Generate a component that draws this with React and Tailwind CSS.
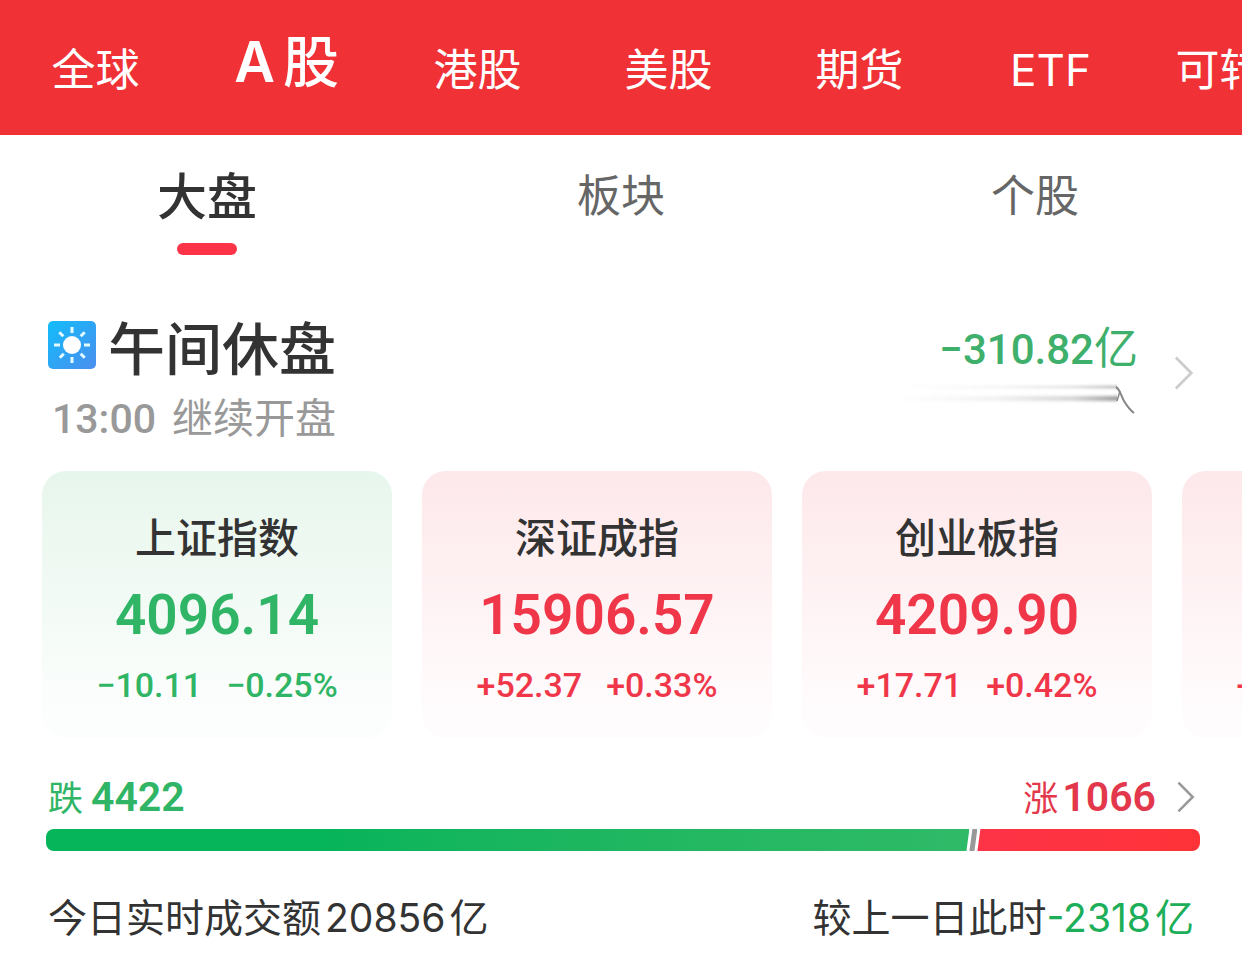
import React from "react";

const markets = ["全球", "A股", "港股", "美股", "期货", "ETF", "可转债"];
const sections = ["大盘", "板块", "个股"];
const indices = [
  { name: "上证指数", value: "4096.14", change: "−10.11", percent: "−0.25%", up: false },
  { name: "深证成指", value: "15906.57", change: "+52.37", percent: "+0.33%", up: true },
  { name: "创业板指", value: "4209.90", change: "+17.71", percent: "+0.42%", up: true },
  { name: "科创综指", value: "1820.35", change: "+12.64", percent: "+0.70%", up: true },
];
const falling = 4422;
const rising = 1066;

function MarketNav() {
  return (
    <nav className="flex h-[135px] items-start overflow-hidden bg-[#f03136] text-white">
      {markets.map((name) =>
        name === "A股" ? (
          <button key={name} className="flex w-[191px] shrink-0 items-baseline justify-center gap-2 whitespace-nowrap pt-6 text-[56px] leading-[68px] font-medium">
            <span className="font-['Inter'] font-semibold">A</span>
            <span>股</span>
          </button>
        ) : (
          <button key={name} className="w-[191px] shrink-0 whitespace-nowrap pt-9 text-center text-[44px] leading-[68px] font-['Inter','Noto_Sans_CJK_SC',sans-serif]">
            {name}
          </button>
        )
      )}
    </nav>
  );
}

function SectionTabs() {
  return (
    <div className="grid grid-cols-3 pt-6">
      {sections.map((name, i) => (
        <button key={name} className="flex flex-col items-center gap-4">
          <span className={i === 0 ? "text-[50px] leading-[68px] font-medium text-[#333]" : "text-[44px] leading-[68px] text-[#666]"}>
            {name}
          </span>
          {i === 0 && <span className="h-3 w-15 rounded-full bg-[#fd3347]" />}
        </button>
      ))}
    </div>
  );
}

function SunIcon() {
  return (
    <svg className="size-12" viewBox="0 0 48 48" aria-hidden="true">
      <defs>
        <linearGradient id="sky" x1="0" y1="0" x2="1" y2="1">
          <stop offset="0" stopColor="#12bdfb" />
          <stop offset="1" stopColor="#4b8eee" />
        </linearGradient>
      </defs>
      <rect width="48" height="48" rx="5" fill="url(#sky)" />
      <circle cx="24" cy="24" r="9" fill="#fff" />
      <path
        d="M24 6v6M24 36v6M6 24h6M36 24h6M11.3 11.3l4 4M32.7 32.7l4 4M11.8 36.7l4-4M32.7 15.3l4-4"
        stroke="#e4fbff"
        strokeWidth="3"
      />
    </svg>
  );
}

function Chevron({ className }) {
  return (
    <svg className={className} viewBox="0 0 22 38" fill="none" stroke="currentColor" aria-hidden="true">
      <path d="M2 2l17 17L2 36" strokeWidth="3" />
    </svg>
  );
}

function TrendLine() {
  return (
    <svg className="h-8 w-60" viewBox="0 0 240 32" fill="none" aria-hidden="true">
      <defs>
        <linearGradient id="fade" x1="0" y1="0" x2="1" y2="0">
          <stop offset="0" stopColor="#777" stopOpacity="0" />
          <stop offset="0.45" stopColor="#777" stopOpacity="0.1" />
          <stop offset="0.8" stopColor="#777" stopOpacity="0.3" />
          <stop offset="1" stopColor="#777" stopOpacity="0.7" />
        </linearGradient>
        <filter id="soft" x="0" y="-3" width="1" height="7">
          <feGaussianBlur stdDeviation="0.4 1.7" />
        </filter>
      </defs>
      <g filter="url(#soft)">
        <rect x="0" y="3" width="219" height="2" fill="url(#fade)" />
        <rect x="0" y="13" width="219" height="5" fill="url(#fade)" />
      </g>
      <path d="M219 18l3-10" stroke="#888" strokeWidth="1.5" />
      <path d="M218 4c4 2 5 9 8 14s6 9 10 12" stroke="#868686" strokeWidth="2" />
    </svg>
  );
}

function IndexCard({ name, value, change, percent, up }) {
  return (
    <a
      href="#index"
      className={
        "flex h-[267px] w-[350px] shrink-0 flex-col items-center rounded-3xl bg-linear-to-b to-90% pt-8 " +
        (up ? "from-[#fde8ea] to-[#fffcfd] text-[#f0374a]" : "from-[#e7f6ec] to-[#fcfefd] text-[#30b566]")
      }
    >
      <span className="text-[41px] leading-[64px] font-medium text-[#333]">{name}</span>
      <span className="pt-3 font-['Roboto'] text-[55px] leading-[72px] font-semibold">{value}</span>
      <span className="flex gap-6 pt-3 font-['Roboto'] text-[34px] leading-[44px] font-medium">
        <span>{change}</span>
        <span>{percent}</span>
      </span>
    </a>
  );
}

export default function App() {
  return (
    <main lang="zh-CN" className="overflow-hidden bg-white pb-7 font-['Noto_Sans_CJK_SC',sans-serif]">
      <MarketNav />
      <SectionTabs />

      <section className="flex items-start justify-between pt-14 pr-12 pl-12">
        <div>
          <div className="flex items-center gap-3">
            <SunIcon />
            <h1 className="text-[57px] leading-[68px] font-medium text-[#333]">午间休盘</h1>
          </div>
          <p className="flex h-[76px] items-baseline gap-4 text-[#999]">
            <span className="pl-1 font-['Roboto'] text-[41px] leading-[72px] font-medium">13:00</span>
            <span className="text-[41px] leading-[72px]">继续开盘</span>
          </p>
        </div>
        <a href="#flow" className="flex items-center gap-9">
          <span className="flex flex-col items-end">
            <span className="flex h-[72px] items-baseline text-[44px] leading-[68px] text-[#3fb06c]">
              <span className="font-['Roboto'] text-[42px] font-medium">−310.82</span>
              <span>亿</span>
            </span>
            <TrendLine />
          </span>
          <Chevron className="mt-5 h-9 w-5 text-[#ccc]" />
        </a>
      </section>

      <section className="flex gap-[30px] overflow-hidden pt-4 pl-[42px]">
        {indices.map((item) => (
          <IndexCard key={item.name} {...item} />
        ))}
      </section>

      <section className="pt-7 pr-[42px] pl-[46px]">
        <a href="#breadth" className="flex h-[63px] items-start justify-between pl-[2px]">
          <span className="flex items-baseline gap-2 text-[#30b566]">
            <span className="text-[35px] leading-[60px]">跌</span>
            <span className="font-['Roboto'] text-[41px] leading-[60px] font-semibold">{falling}</span>
          </span>
          <span className="flex items-center gap-5 pr-1 text-[#e3374b]">
            <span className="flex items-baseline gap-1">
              <span className="text-[35px] leading-[60px]">涨</span>
              <span className="font-['Roboto'] text-[41px] leading-[60px] font-semibold">{rising}</span>
            </span>
            <Chevron className="h-8 w-5 text-[#999]" />
          </span>
        </a>
        <div className="flex h-[22px] overflow-hidden rounded-lg">
          <div
            className="bg-linear-to-r from-[#06b45a] from-30% to-[#2fba68] [clip-path:polygon(0_0,100%_0,calc(100%-3px)_100%,0_100%)]"
            style={{ flexGrow: falling, flexBasis: 0 }}
          />
          <div className="w-2 bg-[#999] [clip-path:polygon(3px_0,100%_0,calc(100%-3px)_100%,0_100%)]" />
          <div
            className="bg-linear-to-r from-[#fd3347] to-[#fe3338] [clip-path:polygon(3px_0,100%_0,100%_100%,0_100%)]"
            style={{ flexGrow: rising, flexBasis: 0 }}
          />
        </div>
      </section>

      <section className="flex items-center justify-between px-12 pt-[34px] text-[39px] leading-[60px] text-[#333]">
        <p className="flex items-baseline gap-1">
          <span>今日实时成交额</span>
          <span className="font-['Inter']">20856</span>
          <span>亿</span>
        </p>
        <p className="flex items-baseline">
          <span>较上一日此时</span>
          <span className="flex items-baseline gap-1 text-[#1cae58]">
            <span className="font-['Inter']">-2318</span>
            <span>亿</span>
          </span>
        </p>
      </section>
    </main>
  );
}
